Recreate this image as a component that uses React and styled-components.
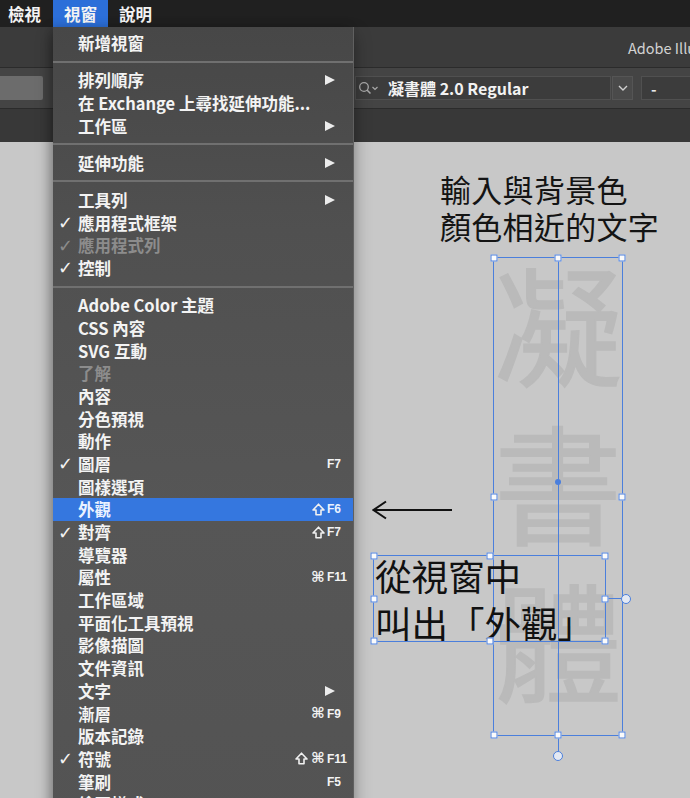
import React from "react";
import styled, { createGlobalStyle } from "styled-components";

const GlobalStyle = createGlobalStyle`
  html, body {
    margin: 0;
    padding: 0;
    background: #c8c8c8;
  }
  body {
    font-family: "Noto Sans CJK TC", "Noto Sans", sans-serif;
  }
`;

const BLUE = "#4b7fdc";

const menuItems = [
  { label: "新增視窗" },
  { sep: true },
  { label: "排列順序", sub: true },
  { label: "在 Exchange 上尋找延伸功能..." },
  { label: "工作區", sub: true },
  { sep: true },
  { label: "延伸功能", sub: true },
  { sep: true },
  { label: "工具列", sub: true },
  { label: "應用程式框架", checked: true },
  { label: "應用程式列", checked: true, disabled: true },
  { label: "控制", checked: true },
  { sep: true },
  { label: "Adobe Color 主題" },
  { label: "CSS 內容" },
  { label: "SVG 互動" },
  { label: "了解", disabled: true },
  { label: "內容" },
  { label: "分色預視" },
  { label: "動作" },
  { label: "圖層", checked: true, key: "F7" },
  { label: "圖樣選項" },
  { label: "外觀", shift: true, key: "F6", active: true },
  { label: "對齊", checked: true, shift: true, key: "F7" },
  { label: "導覽器" },
  { label: "屬性", cmd: true, key: "F11" },
  { label: "工作區域" },
  { label: "平面化工具預視" },
  { label: "影像描圖" },
  { label: "文件資訊" },
  { label: "文字", sub: true },
  { label: "漸層", cmd: true, key: "F9" },
  { label: "版本記錄" },
  { label: "符號", checked: true, shift: true, cmd: true, key: "F11" },
  { label: "筆刷", key: "F5" },
  { label: "繪圖樣式", checked: true, shift: true, key: "F5" },
];

function ShiftIcon() {
  return (
    <svg width="13" height="13" viewBox="0 0 13 13">
      <path
        d="M6.5 1.2 L12 7 H9 V11.8 H4 V7 H1 Z"
        fill="none"
        stroke="currentColor"
        strokeWidth="1.6"
        strokeLinejoin="round"
      />
    </svg>
  );
}

export default function App() {
  return (
    <>
      <GlobalStyle />
      <Screen>
        <MenuBar>
          <MenuTitle>檢視</MenuTitle>
          <MenuTitle $open>視窗</MenuTitle>
          <MenuTitle>說明</MenuTitle>
        </MenuBar>

        <TitleBar>
          <AppTitle>Adobe Illustrator 2020</AppTitle>
        </TitleBar>

        <ControlBar>
          <StubField />
          <FontPicker>
            <svg width="22" height="14" viewBox="0 0 22 14">
              <circle cx="6" cy="6" r="4.3" fill="none" stroke="#a9a9a9" strokeWidth="1.3" />
              <path d="M9 9 L12.5 12.5" stroke="#a9a9a9" strokeWidth="1.5" />
              <path d="M14.5 6 L17 8.5 L19.5 6" fill="none" stroke="#a9a9a9" strokeWidth="1.2" />
            </svg>
            <FontName>凝書體 2.0 Regular</FontName>
          </FontPicker>
          <DropButton>
            <svg width="10" height="6" viewBox="0 0 10 6">
              <path d="M1 1 L5 5 L9 1" fill="none" stroke="#d0d0d0" strokeWidth="1.4" />
            </svg>
          </DropButton>
          <ValueField>-</ValueField>
        </ControlBar>

        <PanelStrip />

        <Artboard>
          <Caption $x={440} $y={28}>
            輸入與背景色
            <br />
            顏色相近的文字
          </Caption>

          <TextFrame $x={493} $y={115} $w={130} $h={479} $axis>
            <GhostColumn>
              <GhostChar>凝</GhostChar>
              <GhostChar>書</GhostChar>
              <GhostChar>體</GhostChar>
            </GhostColumn>
            <Handle $l="0%" $t="0%" />
            <Handle $l="50%" $t="0%" />
            <Handle $l="100%" $t="0%" />
            <Handle $l="0%" $t="50%" />
            <Handle $l="100%" $t="50%" />
            <Handle $l="0%" $t="100%" />
            <Handle $l="50%" $t="100%" />
            <Handle $l="100%" $t="100%" />
            <Dot style={{ left: "50%", top: 224 }} />
            <Stem $vertical />
          </TextFrame>

          <ArrowMark width="82" height="20" viewBox="0 0 82 20">
            <path d="M1.5 10 H80" stroke="#111" strokeWidth="2" />
            <path d="M14 1.5 L1.5 10 L14 18.5" fill="none" stroke="#111" strokeWidth="2" />
          </ArrowMark>

          <TextFrame $x={373} $y={413} $w={233} $h={87} $center>
            <CalloutText>
              從視窗中
              <br />
              叫出「外觀」
            </CalloutText>
            <Handle $l="0%" $t="0%" />
            <Handle $l="50%" $t="0%" />
            <Handle $l="100%" $t="0%" />
            <Handle $l="0%" $t="50%" />
            <Handle $l="100%" $t="50%" />
            <Handle $l="0%" $t="100%" />
            <Handle $l="50%" $t="100%" />
            <Handle $l="100%" $t="100%" />
            <Stem />
          </TextFrame>
        </Artboard>

        <Dropdown>
          {menuItems.map((item, i) =>
            item.sep ? (
              <Divider key={i} />
            ) : (
              <Item key={i} $active={item.active} $disabled={item.disabled}>
                <Check>{item.checked ? "✓" : ""}</Check>
                <Label>{item.label}</Label>
                {(item.shift || item.cmd) && (
                  <Mods>
                    {item.shift && <ShiftIcon />}
                    {item.cmd && <CmdGlyph>⌘</CmdGlyph>}
                  </Mods>
                )}
                <KeyCell>{item.sub ? <SubArrow /> : item.key}</KeyCell>
              </Item>
            )
          )}
        </Dropdown>
      </Screen>
    </>
  );
}

const Screen = styled.div`
  position: relative;
  width: 690px;
  height: 798px;
  overflow: hidden;
  display: flex;
  flex-direction: column;
  background: #c8c8c8;
`;

const MenuBar = styled.div`
  height: 27px;
  flex-shrink: 0;
  display: flex;
  background: #202020;
`;

const MenuTitle = styled.div`
  display: flex;
  align-items: center;
  padding: 0 11px;
  font-size: 16.5px;
  font-weight: 700;
  color: #f4f4f4;
  background: ${(p) => (p.$open ? "#2c6fd9" : "transparent")};
  &:first-child {
    padding-left: 8px;
    padding-right: 12px;
  }
`;

const TitleBar = styled.div`
  height: 40px;
  flex-shrink: 0;
  display: flex;
  align-items: center;
  padding-left: 628px;
  background: #3b3b3b;
  white-space: nowrap;
`;

const AppTitle = styled.span`
  font-size: 14.5px;
  color: #d2d2d2;
`;

const ControlBar = styled.div`
  height: 40px;
  flex-shrink: 0;
  display: flex;
  align-items: center;
  background: #444444;
  border-top: 1px solid #2b2b2b;
  border-bottom: 1px solid #2b2b2b;
  white-space: nowrap;
`;

const StubField = styled.div`
  width: 43px;
  height: 24px;
  flex-shrink: 0;
  background: #6c6c6c;
  border-radius: 0 2px 2px 0;
`;

const FontPicker = styled.div`
  margin-left: 312px;
  width: 256px;
  height: 24px;
  flex-shrink: 0;
  box-sizing: border-box;
  display: flex;
  align-items: center;
  padding-left: 2px;
  background: #3c3c3c;
  border: 1px solid #505050;
`;

const FontName = styled.span`
  margin-left: 8px;
  font-size: 16px;
  font-weight: 700;
  color: #f2f2f2;
`;

const DropButton = styled.div`
  margin-left: 1px;
  width: 21px;
  height: 24px;
  flex-shrink: 0;
  box-sizing: border-box;
  display: flex;
  align-items: center;
  justify-content: center;
  background: #4a4a4a;
  border: 1px solid #555;
`;

const ValueField = styled.div`
  margin-left: 8px;
  width: 80px;
  height: 24px;
  flex-shrink: 0;
  box-sizing: border-box;
  padding-left: 9px;
  display: flex;
  align-items: center;
  background: #3c3c3c;
  border: 1px solid #505050;
  font-size: 15px;
  font-weight: 700;
  color: #e8e8e8;
`;

const PanelStrip = styled.div`
  height: 33px;
  flex-shrink: 0;
  background: #383838;
`;

const Artboard = styled.div`
  position: relative;
  flex: 1;
  background: #c8c8c8;
`;

const Caption = styled.div`
  position: absolute;
  left: ${(p) => p.$x}px;
  top: ${(p) => p.$y}px;
  font-size: 31px;
  line-height: 37px;
  letter-spacing: 0.3px;
  color: #141414;
  white-space: nowrap;
`;

const TextFrame = styled.div`
  position: absolute;
  left: ${(p) => p.$x}px;
  top: ${(p) => p.$y}px;
  width: ${(p) => p.$w}px;
  height: ${(p) => p.$h}px;
  box-sizing: border-box;
  border: 1px solid ${BLUE};
  display: flex;
  align-items: ${(p) => (p.$center ? "center" : "flex-start")};
  justify-content: ${(p) => (p.$center ? "flex-start" : "center")};
  &::after {
    content: "";
    display: ${(p) => (p.$axis ? "block" : "none")};
    position: absolute;
    left: 50%;
    top: 0;
    bottom: 0;
    width: 1px;
    margin-left: -0.5px;
    background: ${BLUE};
  }
`;

const GhostColumn = styled.div`
  display: flex;
  flex-direction: column;
  gap: 28px;
  margin-top: -1px;
`;

const GhostChar = styled.span`
  display: block;
  font-size: 128px;
  font-weight: 400;
  line-height: 130px;
  height: 130px;
  color: #bababa;
  -webkit-text-stroke: 1.5px #bababa;
`;

const CalloutText = styled.div`
  padding-left: 1px;
  font-size: 36.5px;
  line-height: 47px;
  color: #111;
  white-space: nowrap;
`;

const Handle = styled.span`
  position: absolute;
  left: ${(p) => p.$l};
  top: ${(p) => p.$t};
  width: 7px;
  height: 7px;
  box-sizing: border-box;
  transform: translate(-50%, -50%);
  background: #fbfbfb;
  border: 1px solid ${BLUE};
  z-index: 2;
`;

const Dot = styled.span`
  position: absolute;
  width: 6px;
  height: 6px;
  border-radius: 50%;
  transform: translate(-50%, -50%);
  background: ${BLUE};
`;

const Stem = styled.span`
  position: absolute;
  ${(p) =>
    p.$vertical
      ? `left: 50%; top: 100%; width: 1px; height: 16px; margin-left: -0.5px;`
      : `left: 100%; top: 50%; height: 1px; width: 16px; margin-top: -0.5px;`}
  background: ${BLUE};
  &::after {
    content: "";
    position: absolute;
    width: 10px;
    height: 10px;
    box-sizing: border-box;
    border-radius: 50%;
    border: 1px solid ${BLUE};
    background: #e4e9f3;
    ${(p) =>
      p.$vertical
        ? `left: -4.5px; top: 100%;`
        : `top: -4.5px; left: 100%;`}
  }
`;

const ArrowMark = styled.svg`
  position: absolute;
  left: 372px;
  top: 358px;
`;

const Dropdown = styled.div`
  position: absolute;
  top: 27px;
  left: 53px;
  width: 301px;
  bottom: -40px;
  box-sizing: border-box;
  padding-top: 4.6px;
  background: linear-gradient(180deg, #474747 0%, #505050 25%, #565656 60%, #535353 100%);
  border-right: 1px solid #606060;
  box-shadow: 0 8px 16px rgba(0, 0, 0, 0.35), -4px 0 9px rgba(0, 0, 0, 0.16);
  z-index: 5;
`;

const Divider = styled.div`
  height: 14.5px;
  display: flex;
  align-items: center;
  &::after {
    content: "";
    flex: 1;
    height: 2px;
    background: #707070;
  }
`;

const Item = styled.div`
  height: 22.7px;
  display: flex;
  align-items: center;
  font-size: 16.5px;
  font-weight: 700;
  white-space: nowrap;
  color: ${(p) => (p.$disabled ? "#8c8c8c" : p.$active ? "#eaf2ff" : "#f3f3f3")};
  background: ${(p) => (p.$active ? "#3577df" : "transparent")};
`;

const Check = styled.span`
  width: 25px;
  flex-shrink: 0;
  box-sizing: border-box;
  padding-left: 5px;
  font-family: "DejaVu Sans", sans-serif;
  font-size: 18px;
  font-weight: 700;
`;

const Label = styled.span`
  flex: 1;
`;

const Mods = styled.span`
  display: flex;
  align-items: center;
  gap: 3px;
  margin-right: 2px;
  color: #f0f0f0;
`;

const CmdGlyph = styled.span`
  font-family: "DejaVu Sans", sans-serif;
  font-size: 15px;
  font-weight: 700;
  line-height: 1;
`;

const KeyCell = styled.span`
  width: 26px;
  flex-shrink: 0;
  font-family: "Liberation Sans", Arial, sans-serif;
  font-size: 12px;
  font-weight: 700;
`;

const SubArrow = styled.span`
  display: block;
  width: 0;
  height: 0;
  margin-left: -2px;
  border-left: 10px solid #ececec;
  border-top: 5.5px solid transparent;
  border-bottom: 5.5px solid transparent;
`;
